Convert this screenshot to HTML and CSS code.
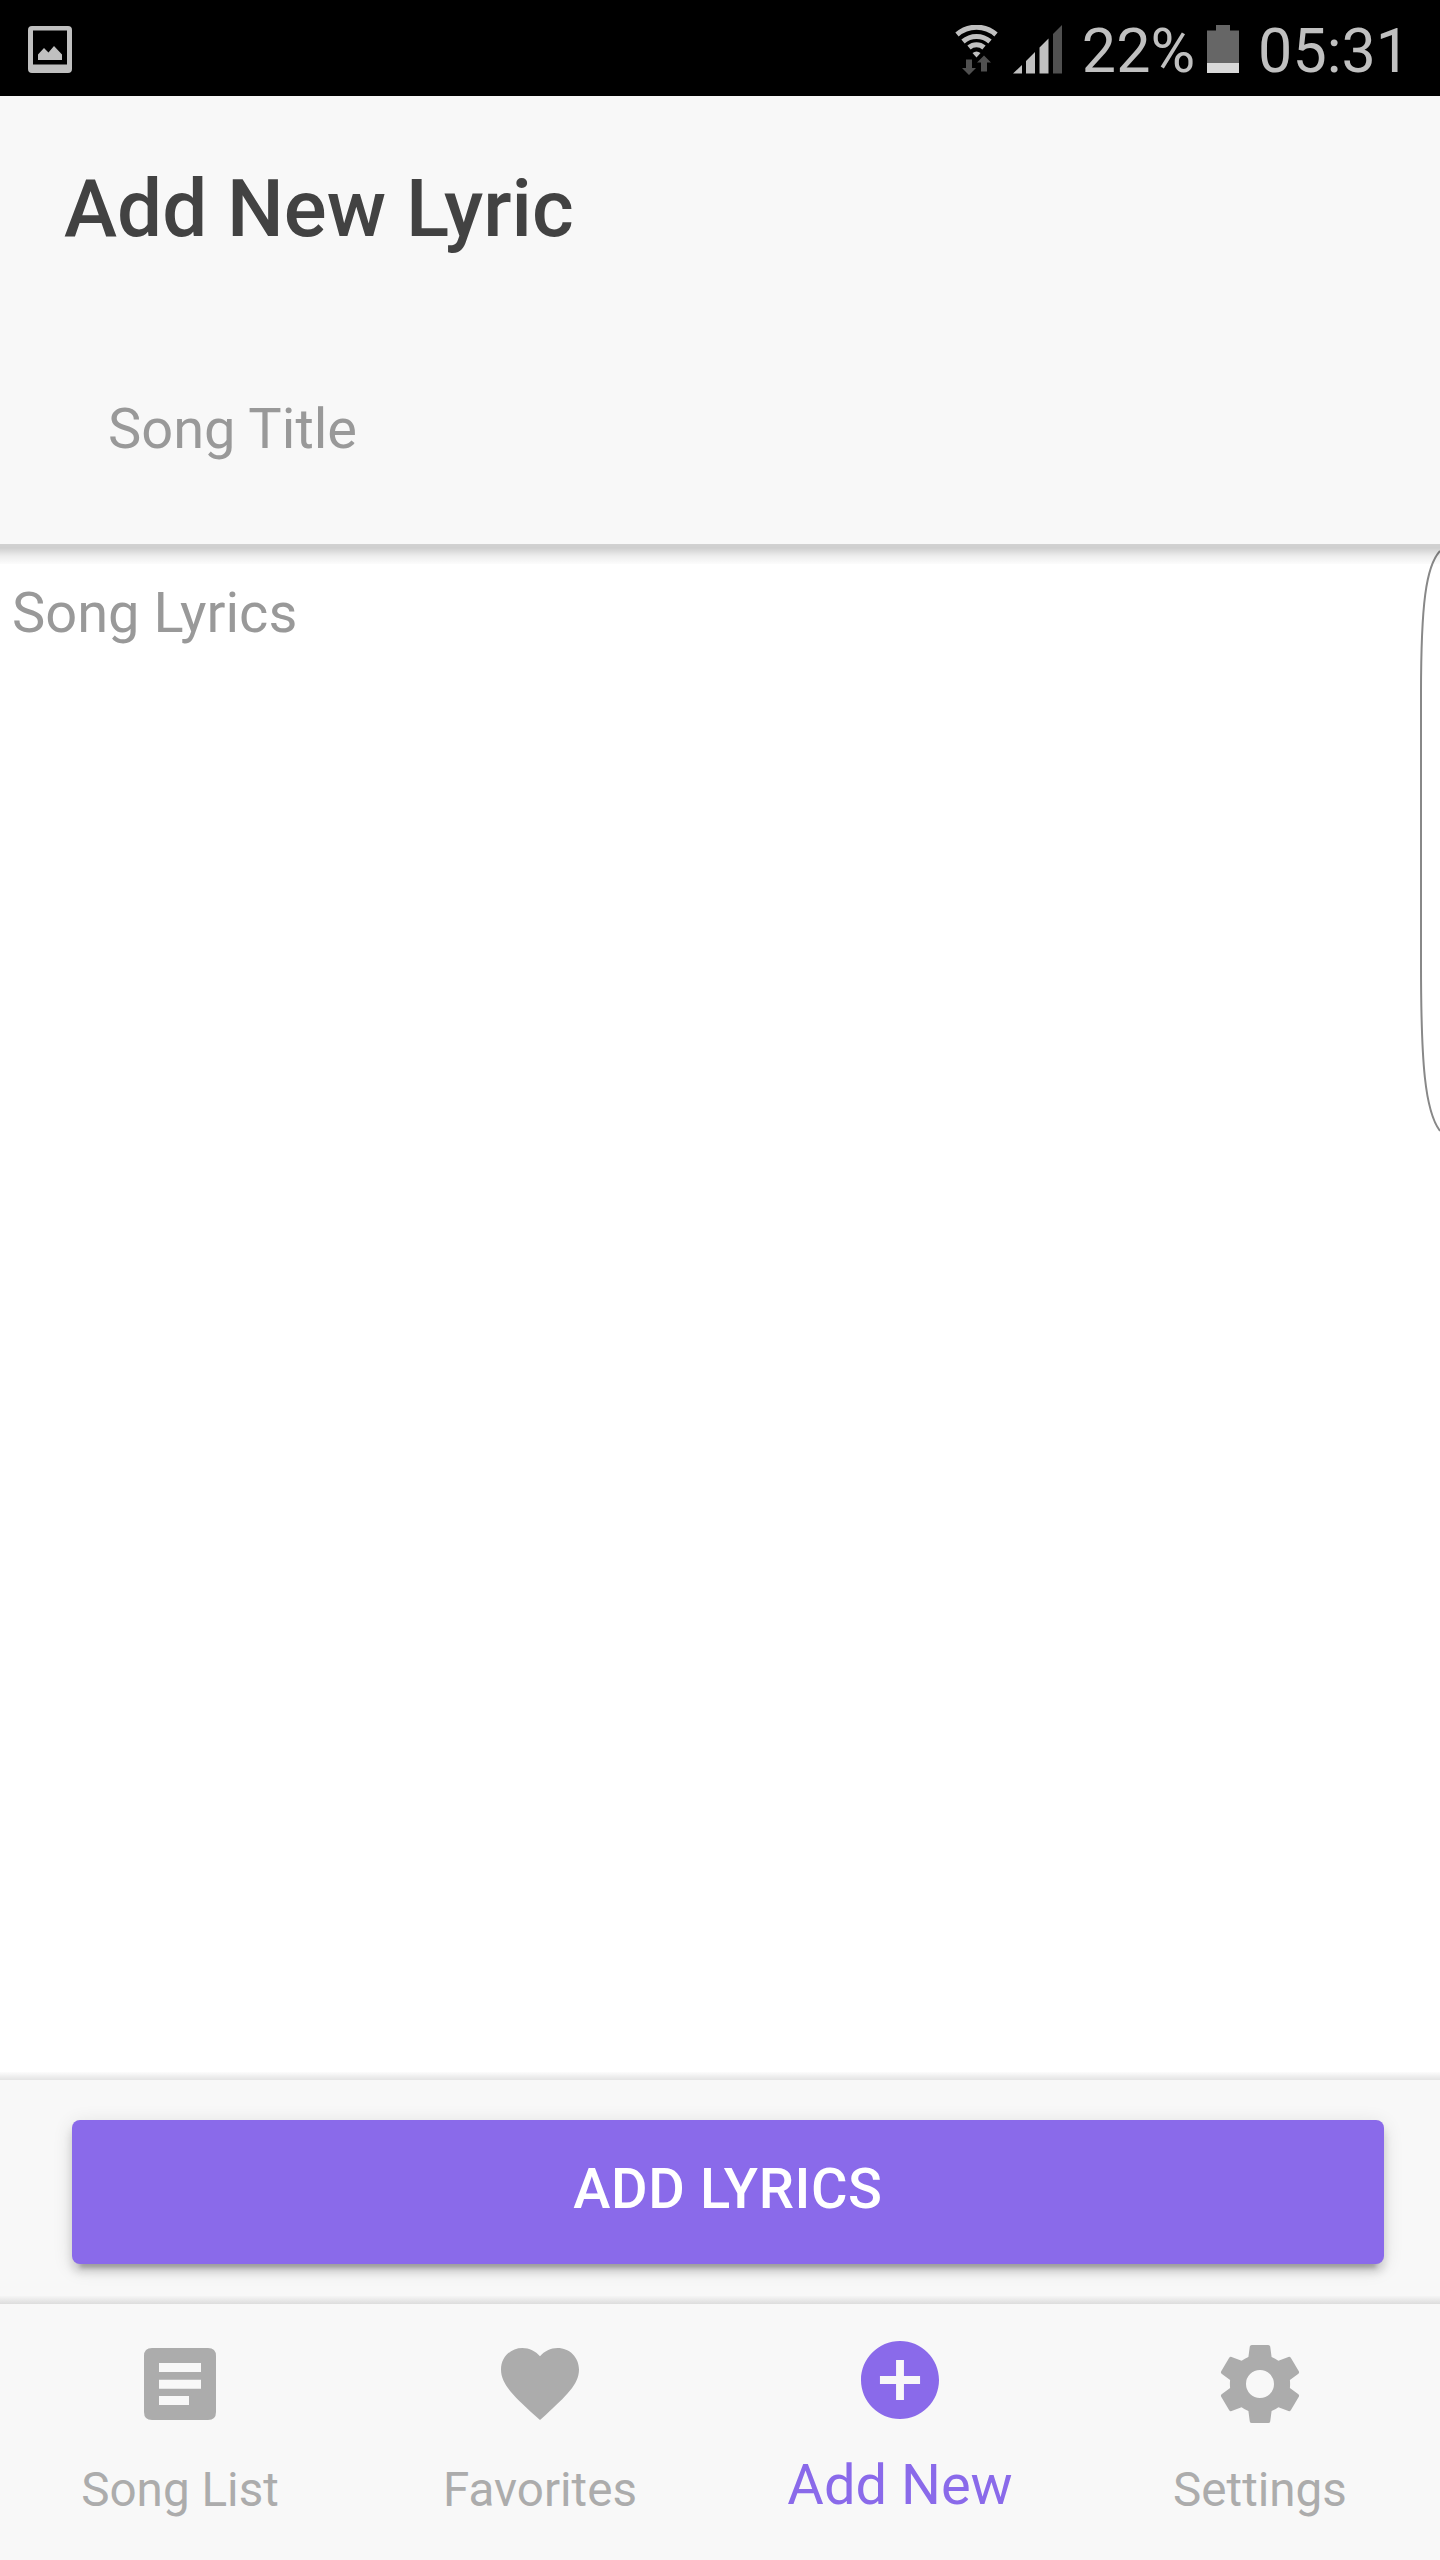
FILE: index.html
```html
<!DOCTYPE html>
<html lang="en">
<head>
    <meta charset="UTF-8">
    <meta name="viewport" content="width=device-width, initial-scale=1.0">
    <title>Add New Lyric</title>
    <link rel="stylesheet" href="styles.css">
</head>
<body>
    <div class="status-bar">
        <svg class="status-image" width="44" height="48" viewBox="0 0 44 48">
            <path fill-rule="evenodd" d="M4 0h36q4 0 4 4v39q0 4-4 4H4q-4 0-4-4V4q0-4 4-4zM5 4.500v34h34v-34z"/>
            <path d="M10 34v-5.500l6-6.500 4.500 4.500L26 20l8 8.500V34z"/>
        </svg>
        <div class="status-right">
            <svg class="status-wifi" width="44" height="50" viewBox="0 0 44 50">
                <g class="wifi-arcs">
                    <path d="M2 9.500a29.500 29.500 0 0 1 39 0"/>
                    <path d="M8 16.500a20.500 20.500 0 0 1 27 0"/>
                    <path d="M14 22.500a11.500 11.500 0 0 1 15 0"/>
                </g>
                <path d="M17.500 28q4-3 8 0l-4 4.500z"/>
                <path class="dim" d="M11 34.500h6v8.500h4l-7 7-7-7h4zM26 46.500v-9h-4l7-7 7 7h-4v9z"/>
            </svg>
            <svg class="status-signal" width="50" height="49" viewBox="0 0 50 49">
                <path d="M0 48.500l9-8.500v8.500zM13 48.500V36l9-9v21.500zM26.500 48.500V22.500l9-9v35z"/>
                <path class="dim" d="M40 48.500V9l9-9v48.500z"/>
            </svg>
            <span class="battery-text">22%</span>
            <svg class="status-battery" width="32" height="48" viewBox="0 0 32 48">
                <path class="battery-empty" d="M0 5.500h9V0h14v5.500h9V38H0z"/>
                <path class="battery-level" d="M0 38h32v10H0z"/>
            </svg>
            <span class="time">05:31</span>
        </div>
    </div>

    <div class="header">
        <h1>Add New Lyric</h1>
        <input type="text" class="song-title" placeholder="Song Title">
    </div>

    <div class="content">
        <textarea class="song-lyrics" placeholder="Song Lyrics"></textarea>
        <svg class="edge-handle" width="22" height="590" viewBox="0 0 22 590">
            <path d="M22 7C8 22 3 60 3 150v270c0 100 4 147 19 167"/>
        </svg>
    </div>

    <div class="footer">
        <button class="add-button">ADD LYRICS</button>
    </div>

    <div class="tabs">
        <a class="tab">
            <svg class="tab-icon" viewBox="0 0 96 96">
                <path fill-rule="evenodd" d="M20 12h56q8 0 8 8v56q0 8-8 8H20q-8 0-8-8V20q0-8 8-8zM27 27v9h42v-9zM27 43.700v9h42v-9zM27 60v9h30v-9z"/>
            </svg>
            <span>Song List</span>
        </a>
        <a class="tab">
            <svg class="tab-icon" viewBox="0 0 512 512">
                <path d="M256 448l-30.164-27.211C118.718 322.442 48 258.610 48 179.095 48 114.221 97.918 64 162.400 64c36.399 0 70.717 16.742 93.600 43.947C278.882 80.742 313.199 64 349.600 64 414.082 64 464 114.221 464 179.095c0 79.516-70.719 143.348-177.836 241.694L256 448z"/>
            </svg>
            <span>Favorites</span>
        </a>
        <a class="tab active">
            <svg class="tab-icon" viewBox="0 0 512 512">
                <path d="M256 48C141.125 48 48 141.125 48 256s93.125 208 208 208 208-93.125 208-208S370.875 48 256 48zm107 229h-86v86h-42v-86h-86v-42h86v-86h42v86h86v42z"/>
            </svg>
            <span>Add New</span>
        </a>
        <a class="tab">
            <svg class="tab-icon" viewBox="0 0 96 96">
                <path fill-rule="evenodd" d="M39.800 9h16.400q1.700 0 2 1.600l1.400 10.300q3.600 1.500 6.800 3.900l10-3.900q1.500-.5 2.400.8l8 13.500q.8 1.500-.4 2.500l-8.500 6.400q.4 3.900 0 7.800l8.500 6.400q1.200 1 .4 2.500l-8 13.500q-.9 1.300-2.400.8l-10-3.900q-3.200 2.400-6.800 3.900l-1.400 10.300q-.3 1.600-2 1.600H39.800q-1.700 0-2-1.600l-1.400-10.300q-3.600-1.500-6.800-3.900l-10 3.900q-1.500.5-2.400-.8l-8-13.500q-.8-1.500.4-2.500l8.500-6.400q-.4-3.900 0-7.800l-8.500-6.400q-1.200-1-.4-2.500l8-13.500q.9-1.300 2.400-.8l10 3.900q3.200-2.400 6.800-3.900l1.400-10.300q.3-1.600 2-1.600zM48 34a14 14 0 1 0 0 28 14 14 0 0 0 0-28z"/>
            </svg>
            <span>Settings</span>
        </a>
    </div>
</body>
</html>
```
FILE: styles.css
```css
* {
    box-sizing: border-box;
}
body {
    margin: 0;
    height: 2560px;
    display: flex;
    flex-direction: column;
    font-family: Roboto, sans-serif;
    background-color: #fff;
    overflow: hidden;
}
.status-bar {
    height: 96px;
    flex: none;
    display: flex;
    justify-content: space-between;
    padding: 0 30px 0 28px;
    background-color: #000;
    color: #c0c0c0;
    fill: #c0c0c0;
}
.status-image {
    margin-top: 26px;
}
.status-right {
    display: flex;
    font-size: 61px;
    line-height: 72px;
    padding-top: 15px;
}
.status-right svg {
    margin-top: 10px;
}
.wifi-arcs {
    fill: none;
    stroke: #c0c0c0;
    stroke-width: 5;
}
.dim {
    fill: #505050;
}
.status-signal {
    margin-left: 14px;
}
.battery-text {
    margin-left: 19px;
}
.status-battery {
    margin-left: 12px;
}
.battery-empty {
    fill: #666;
}
.battery-level {
    fill: #d8d8d8;
}
.time {
    margin-left: 19px;
}
.header {
    height: 448px;
    flex: none;
    position: relative;
    z-index: 1;
    padding: 65px 64px 0;
    background-color: #f8f8f8;
}
.header::after {
    content: "";
    position: absolute;
    left: 0;
    right: 0;
    bottom: -20px;
    height: 20px;
    background: linear-gradient(rgba(0, 0, 0, 0.18), rgba(0, 0, 0, 0.19) 20%, rgba(0, 0, 0, 0.07) 60%, rgba(0, 0, 0, 0.01));
}
h1 {
    margin: 0;
    font-size: 80px;
    line-height: 96px;
    font-weight: 500;
    color: #424242;
}
input, textarea {
    display: block;
    width: 100%;
    border: none;
    outline: none;
    background: none;
    font-family: inherit;
    font-size: 56px;
    resize: none;
}
input::placeholder, textarea::placeholder {
    color: #999;
}
.song-title {
    height: 80px;
    margin-top: 132px;
    padding: 0 44px;
}
.content {
    flex: 1;
    position: relative;
}
.song-lyrics {
    height: 100%;
    padding: 36px 12px;
    line-height: 66px;
}
.edge-handle {
    position: absolute;
    top: 0;
    right: 0;
    fill: none;
    stroke: #888;
    stroke-width: 2;
}
.footer {
    height: 224px;
    flex: none;
    position: relative;
    padding: 40px 56px 0 72px;
    background-color: #f8f8f8;
}
.footer::before, .tabs::before {
    content: "";
    position: absolute;
    left: 0;
    right: 0;
    top: -8px;
    height: 8px;
    background: linear-gradient(rgba(0, 0, 0, 0.01), rgba(0, 0, 0, 0.11));
}
.add-button {
    display: block;
    width: 100%;
    height: 144px;
    padding: 0 0 6px;
    border: none;
    border-radius: 8px;
    background-color: #8a6aea;
    color: #fff;
    font-family: inherit;
    font-size: 56px;
    font-weight: 500;
    letter-spacing: 0.6px;
    box-shadow: 0 8px 8px rgba(0, 0, 0, 0.14), 0 12px 4px -8px rgba(0, 0, 0, 0.2), 0 4px 20px rgba(0, 0, 0, 0.12);
}
.tabs {
    height: 256px;
    flex: none;
    position: relative;
    display: flex;
    background-color: #f8f8f8;
}
.tab {
    flex: 1;
    display: flex;
    flex-direction: column;
    align-items: center;
    padding-top: 32px;
    color: #acacac;
    fill: #acacac;
    font-size: 47.6px;
    line-height: 56px;
}
.tab-icon {
    width: 96px;
    height: 96px;
    margin-bottom: 30px;
}
.tab.active {
    padding-top: 28px;
    color: #8a6aea;
    fill: #8a6aea;
    font-size: 56px;
}
.tab.active .tab-icon {
    margin-bottom: 29px;
}
```
